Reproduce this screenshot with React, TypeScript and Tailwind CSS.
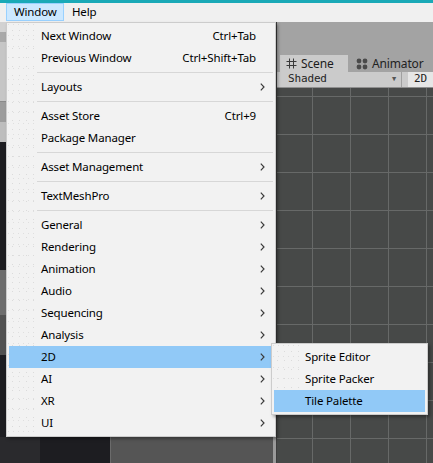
import React from "react";

type Item =
  | { kind: "sep" }
  | { kind: "item"; label: string; shortcut?: string; sub?: boolean; active?: boolean };

const WINDOW_MENU: Item[] = [
  { kind: "item", label: "Next Window", shortcut: "Ctrl+Tab" },
  { kind: "item", label: "Previous Window", shortcut: "Ctrl+Shift+Tab" },
  { kind: "sep" },
  { kind: "item", label: "Layouts", sub: true },
  { kind: "sep" },
  { kind: "item", label: "Asset Store", shortcut: "Ctrl+9" },
  { kind: "item", label: "Package Manager" },
  { kind: "sep" },
  { kind: "item", label: "Asset Management", sub: true },
  { kind: "sep" },
  { kind: "item", label: "TextMeshPro", sub: true },
  { kind: "sep" },
  { kind: "item", label: "General", sub: true },
  { kind: "item", label: "Rendering", sub: true },
  { kind: "item", label: "Animation", sub: true },
  { kind: "item", label: "Audio", sub: true },
  { kind: "item", label: "Sequencing", sub: true },
  { kind: "item", label: "Analysis", sub: true },
  { kind: "item", label: "2D", sub: true, active: true },
  { kind: "item", label: "AI", sub: true },
  { kind: "item", label: "XR", sub: true },
  { kind: "item", label: "UI", sub: true },
];

const SUB_MENU = ["Sprite Editor", "Sprite Packer", "Tile Palette"];

function Chevron() {
  return (
    <svg width="5" height="8" viewBox="0 0 5 8" className="absolute right-[8px] top-[7px]">
      <path d="M0.8 0.6 L4 4 L0.8 7.4" fill="none" stroke="#3b3b3b" strokeWidth="1.2" />
    </svg>
  );
}

function MenuRow({ item }: { item: Item }) {
  if (item.kind === "sep") {
    return (
      <div className="h-[7px] flex items-center pl-[28px]">
        <div className="h-px w-full bg-[#d7d7d7]" />
      </div>
    );
  }
  return (
    <div
      className={`relative h-[22px] flex items-center pl-[32px] pr-[17px] ${
        item.active ? "bg-[#91c9f7]" : ""
      }`}
    >
      <span className="flex-1 whitespace-nowrap">{item.label}</span>
      {item.shortcut && <span className="whitespace-nowrap">{item.shortcut}</span>}
      {item.sub && <Chevron />}
    </div>
  );
}

// faint speckle in the icon gutter
const speckle =
  "opacity-30 bg-[radial-gradient(circle,#a8a8a8_0.6px,transparent_0.8px),radial-gradient(circle,#b4b4b4_0.6px,transparent_0.8px)] bg-[length:7px_9px,5px_11px] bg-[position:1px_2px,3px_6px]";

function WindowMenu() {
  return (
    <div className="absolute left-[6px] top-[22px] w-[270px] border border-[#cccccc] bg-[#f2f2f2] p-[2px] shadow-[2px_2px_3px_rgba(0,0,0,0.35)]">
      <div className={`absolute left-[1px] top-[1px] bottom-[1px] w-[29px] ${speckle}`} />
      <div className="relative">
        {WINDOW_MENU.map((it, i) => (
          <MenuRow key={i} item={it} />
        ))}
      </div>
    </div>
  );
}

function SubMenu() {
  return (
    <div className="absolute left-[271px] top-[343px] w-[157px] border border-[#cccccc] bg-[#f2f2f2] p-[2px] shadow-[2px_2px_3px_rgba(0,0,0,0.35)]">
      <div className={`absolute left-[1px] top-[1px] h-[44px] w-[29px] ${speckle}`} />
      <div className="relative">
        {SUB_MENU.map((label, i) => (
          <div
            key={label}
            className={`h-[22px] flex items-center pl-[31px] whitespace-nowrap ${
              i === 2 ? "bg-[#91c9f7]" : ""
            }`}
          >
            {label}
          </div>
        ))}
      </div>
    </div>
  );
}

function MenuBar() {
  return (
    <div className="h-[19px] bg-[#f0f0f0] flex items-start">
      <div className="ml-[6px] w-[58px] h-[18px] border border-[#99d1ff] bg-[#cce8ff] flex items-center pl-[7px]">
        Window
      </div>
      <div className="h-[18px] flex items-center pl-[8px]">Help</div>
    </div>
  );
}

function LeftPanel() {
  return (
    <div className="w-[276px] flex flex-col">
      {/* strip that peeks out to the left of the menu */}
      <div className="flex-1 flex">
        <div className="w-[6px] flex flex-col">
          <div className="h-[10px] bg-[#d2d2d2]" />
          <div className="h-[10px] bg-[#a9a9a9]" />
          <div className="h-[60px] bg-[#c6c6c6] border-b border-[#8a8a8a]" />
          <div className="h-[20px] bg-[#9c9c9c]" />
          <div className="h-[20px] bg-[#bdbdbd]" />
          <div className="h-[128px] bg-[#1d1d21]" />
          <div className="h-[45px] bg-[#6d6d6d]" />
          <div className="h-[40px] bg-[#515151]" />
          <div className="flex-1 bg-[#1d1d21]" />
        </div>
        <div className="flex-1 bg-[#1d1d21]" />
      </div>
      <div className="h-[26px] flex">
        <div className="w-[40px] bg-[#2a2a2d]" />
        <div className="w-[70px] bg-[#1d1d21]" />
        <div className="flex-1 bg-[#555555] border-l border-[#6b6b6b]" />
        <div className="w-[3px] bg-[#9a9a9a]" />
      </div>
    </div>
  );
}

function SceneView() {
  return (
    <div className="flex-1 flex flex-col bg-[#a3a3a3] border-l border-[#3d3d3d]">
      <div className="h-[33px] bg-[#a3a3a3]" />
      <div className="h-[17px] flex items-end text-[12px]">
        <div className="ml-[3px] w-[68px] h-[17px] bg-[#cbcbcb] flex items-center pl-[6px] gap-[4px]">
          <svg width="11" height="11" viewBox="0 0 11 11">
            <path d="M3.5 0.5 V10.5 M7.5 0.5 V10.5 M0.5 3.5 H10.5 M0.5 7.5 H10.5" stroke="#3a3a3a" strokeWidth="1" fill="none" />
          </svg>
          <span className="text-[#1c1c1c]">Scene</span>
        </div>
        <div className="h-[17px] flex items-center pl-[8px] gap-[4px] text-[#222222]">
          <svg width="12" height="12" viewBox="0 0 12 12">
            <circle cx="3" cy="3" r="2.4" fill="#4a4a4a" />
            <circle cx="9" cy="3" r="2.4" fill="#4a4a4a" />
            <circle cx="3" cy="9" r="2.4" fill="#4a4a4a" />
            <circle cx="9" cy="9" r="2.4" fill="#4a4a4a" />
          </svg>
          <span>Animator</span>
        </div>
      </div>
      <div className="h-[16px] bg-[#cbcbcb] flex items-center border-b border-[#8f8f8f] font-['DejaVu_Sans_Mono',monospace] text-[11px]">
        <div className="ml-[3px] w-[122px] h-[15px] flex items-center pl-[8px] pr-[5px] border-r border-[#a0a0a0]">
          <span className="flex-1 text-[#1f1f1f]">Shaded</span>
          <span className="text-[7px] text-[#555555]">▼</span>
        </div>
        <div className="ml-[6px] flex-1 h-[15px] bg-[#e6e6e6] flex items-center pl-[6px] text-[#1f1f1f]">
          2D
        </div>
      </div>
      <div className="flex-1 bg-[#474948] bg-[linear-gradient(to_right,#676968_1px,transparent_1px),linear-gradient(to_bottom,#676968_1px,transparent_1px)] bg-[length:38px_38px] bg-[position:35px_8px]" />
    </div>
  );
}

export default function App() {
  return (
    <div className="relative w-[433px] h-[463px] overflow-hidden bg-[#1d1d21] font-['Noto_Sans',sans-serif] text-[11.5px] tracking-[-0.15px] text-black">
      <div className="h-[3px] bg-[#1aa9b7]" />
      <MenuBar />
      <div className="flex h-[441px]">
        <LeftPanel />
        <SceneView />
      </div>
      <WindowMenu />
      <SubMenu />
    </div>
  );
}
